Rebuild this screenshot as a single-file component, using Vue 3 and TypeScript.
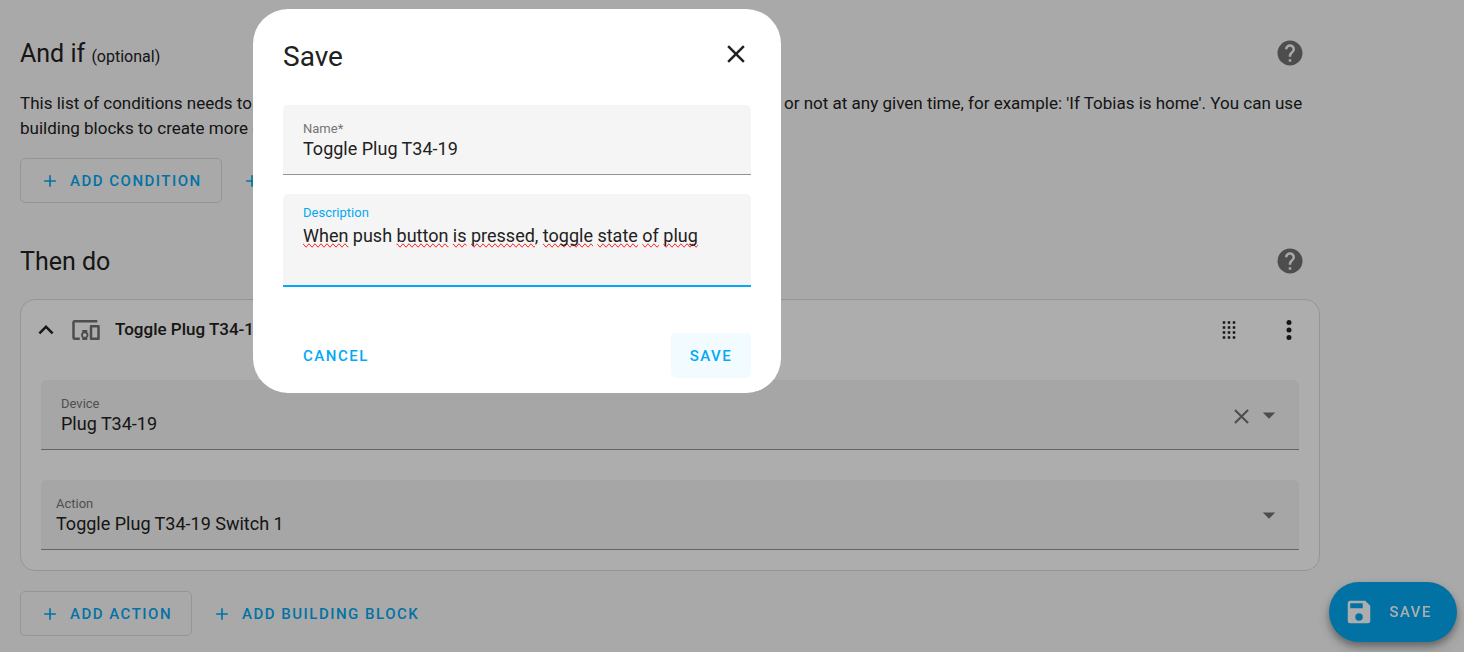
<script setup lang="ts">
import { ref } from 'vue'

const icons = {
  plus: 'M19,13H13V19H11V13H5V11H11V5H13V11H19V13Z',
  close:
    'M19,6.41L17.59,5L12,10.59L6.41,5L5,6.41L10.59,12L5,17.59L6.41,19L12,13.41L17.59,19L19,17.59L13.41,12L19,6.41Z',
  help:
    'M15.07,11.25L14.17,12.17C13.45,12.89 13,13.5 13,15H11V14.5C11,13.39 11.45,12.39 12.17,11.67L13.41,10.41C13.78,10.05 14,9.55 14,9C14,7.89 13.1,7 12,7A2,2 0 0,0 10,9H8A4,4 0 0,1 12,5A4,4 0 0,1 16,9C16,9.88 15.64,10.67 15.07,11.25M13,19H11V17H13M12,2A10,10 0 0,0 2,12A10,10 0 0,0 12,22A10,10 0 0,0 22,12C22,6.47 17.5,2 12,2Z',
  chevronUp: 'M7.41,15.41L12,10.83L16.59,15.41L18,14L12,8L6,14L7.41,15.41Z',
  devices:
    'M3 6H21V4H3A2 2 0 0 0 1 6V18A2 2 0 0 0 3 20H7V18H3M13 12H9V13.78A3 3 0 0 0 9 18.22V20H13V18.22A3 3 0 0 0 13 13.78M11 17.5A1.5 1.5 0 1 1 12.5 16A1.5 1.5 0 0 1 11 17.5M22 8H16A1 1 0 0 0 15 9V19A1 1 0 0 0 16 20H22A1 1 0 0 0 23 19V9A1 1 0 0 0 22 8M21 18H17V10H21Z',
  drag:
    'M7,19V17H9V19H7M11,19V17H13V19H11M15,19V17H17V19H15M7,15V13H9V15H7M11,15V13H13V15H11M15,15V13H17V15H15M7,11V9H9V11H7M11,11V9H13V11H11M15,11V9H17V11H15M7,7V5H9V7H7M11,7V5H13V7H11M15,7V5H17V7H15Z',
  dots:
    'M12,16A2,2 0 0,1 14,18A2,2 0 0,1 12,20A2,2 0 0,1 10,18A2,2 0 0,1 12,16M12,10A2,2 0 0,1 14,12A2,2 0 0,1 12,14A2,2 0 0,1 10,12A2,2 0 0,1 12,10M12,4A2,2 0 0,1 14,6A2,2 0 0,1 12,8A2,2 0 0,1 10,6A2,2 0 0,1 12,4Z',
  menuDown: 'M7,10L12,15L17,10H7Z',
  save:
    'M15,9H5V5H15M12,19A3,3 0 0,1 9,16A3,3 0 0,1 12,13A3,3 0 0,1 15,16A3,3 0 0,1 12,19M17,3H5C3.89,3 3,3.9 3,5V19A2,2 0 0,0 5,21H19A2,2 0 0,0 21,19V7L17,3Z',
}

const device = ref('Plug T34-19')
const action = ref('Toggle Plug T34-19 Switch 1')
const name = ref('Toggle Plug T34-19')

interface Word {
  text: string
  flagged: boolean
}

const words: Word[] = [
  { text: 'When', flagged: true },
  { text: ' push ', flagged: false },
  { text: 'button', flagged: true },
  { text: ' ', flagged: false },
  { text: 'is', flagged: true },
  { text: ' ', flagged: false },
  { text: 'pressed', flagged: true },
  { text: ', ', flagged: false },
  { text: 'toggle', flagged: true },
  { text: ' ', flagged: false },
  { text: 'state', flagged: true },
  { text: ' ', flagged: false },
  { text: 'of', flagged: true },
  { text: ' ', flagged: false },
  { text: 'plug', flagged: true },
]
const description = ref(words.map((w) => w.text).join(''))
</script>

<template>
  <main class="editor">
    <section>
      <header class="section-head">
        <h2>And if <small>(optional)</small></h2>
        <button class="icon-button muted" type="button" aria-label="Learn about conditions">
          <svg viewBox="0 0 24 24"><path :d="icons.help" /></svg>
        </button>
      </header>
      <p class="intro">
        This list of conditions needs to be satisfied for the automation to run. Each condition can be satisfied
        or not at any given time, for example: 'If Tobias is home'. You can use building blocks to create more
        complex conditions.
      </p>
      <div class="buttons">
        <button class="action outlined" type="button">
          <svg viewBox="0 0 24 24"><path :d="icons.plus" /></svg>Add condition
        </button>
        <button class="action" type="button">
          <svg viewBox="0 0 24 24"><path :d="icons.plus" /></svg>Add building block
        </button>
      </div>
    </section>

    <section>
      <header class="section-head">
        <h2>Then do</h2>
        <button class="icon-button muted" type="button" aria-label="Learn about actions">
          <svg viewBox="0 0 24 24"><path :d="icons.help" /></svg>
        </button>
      </header>
      <article class="card">
        <header class="card-head">
          <button class="icon-button small" type="button" aria-label="Collapse">
            <svg viewBox="0 0 24 24"><path :d="icons.chevronUp" /></svg>
          </button>
          <svg class="kind" viewBox="0 0 24 24"><path :d="icons.devices" /></svg>
          <h3>Toggle Plug T34-19 Switch 1</h3>
          <button class="icon-button" type="button" aria-label="Move">
            <svg viewBox="0 0 24 24"><path :d="icons.drag" /></svg>
          </button>
          <button class="icon-button" type="button" aria-label="Menu">
            <svg viewBox="0 0 24 24"><path :d="icons.dots" /></svg>
          </button>
        </header>
        <div class="field">
          <div class="field-text">
            <label for="device">Device</label>
            <select id="device" v-model="device">
              <option>Plug T34-19</option>
            </select>
          </div>
          <button class="clear" type="button" aria-label="Clear">
            <svg viewBox="0 0 24 24"><path :d="icons.close" /></svg>
          </button>
          <svg class="arrow" viewBox="0 0 24 24"><path :d="icons.menuDown" /></svg>
        </div>
        <div class="field tight">
          <div class="field-text">
            <label for="action">Action</label>
            <select id="action" v-model="action">
              <option>Toggle Plug T34-19 Switch 1</option>
            </select>
          </div>
          <svg class="arrow" viewBox="0 0 24 24"><path :d="icons.menuDown" /></svg>
        </div>
      </article>
      <div class="buttons">
        <button class="action outlined" type="button">
          <svg viewBox="0 0 24 24"><path :d="icons.plus" /></svg>Add action
        </button>
        <button class="action" type="button">
          <svg viewBox="0 0 24 24"><path :d="icons.plus" /></svg>Add building block
        </button>
      </div>
    </section>
  </main>

  <button class="fab" type="button">
    <svg viewBox="0 0 24 24"><path :d="icons.save" /></svg>Save
  </button>

  <div class="scrim">
    <form class="dialog" role="dialog" aria-modal="true" aria-labelledby="dialog-title" @submit.prevent>
      <header class="dialog-head">
        <h2 id="dialog-title">Save</h2>
        <button class="icon-button" type="button" aria-label="Close">
          <svg viewBox="0 0 24 24"><path :d="icons.close" /></svg>
        </button>
      </header>
      <div class="field">
        <div class="field-text">
          <label for="name">Name*</label>
          <input id="name" v-model="name" type="text" />
        </div>
      </div>
      <div class="field active">
        <div class="field-text">
          <label for="description">Description</label>
          <div class="spelling">
            <div class="marks" aria-hidden="true">
              <span v-for="(word, i) in words" :key="i" :class="{ flagged: word.flagged }">{{ word.text }}</span>
            </div>
            <textarea id="description" v-model="description" rows="2" spellcheck="false"></textarea>
          </div>
        </div>
      </div>
      <footer class="dialog-actions">
        <button class="action" type="button">Cancel</button>
        <button class="action focused" type="submit">Save</button>
      </footer>
    </form>
  </div>
</template>

<style>
body {
  background: #fafafa;
}
</style>

<style scoped>
.editor,
.fab,
.scrim {
  font-family: Roboto, 'Noto Sans', sans-serif;
  color: #212121;
}

.editor {
  padding: 29px 144px 16px 20px;
  font-size: 17px;
}

section + section {
  margin-top: 34px;
}

svg {
  display: block;
  flex: none;
  width: 30px;
  height: 30px;
  fill: currentColor;
}

h2,
h3,
p {
  margin: 0;
  font-weight: 400;
}

button,
input,
select,
textarea {
  margin: 0;
  padding: 0;
  border: 0;
  outline: 0;
  background: none;
  color: inherit;
  font: inherit;
}

button {
  cursor: pointer;
}

.section-head {
  display: flex;
  align-items: center;
  justify-content: space-between;
  height: 48px;
  margin-bottom: 14px;
}

.section-head h2 {
  font-size: 25px;
}

.section-head small {
  font-size: 16px;
}

.icon-button {
  display: grid;
  flex: none;
  place-items: center;
  width: 60px;
  height: 48px;
}

.icon-button.small {
  width: 30px;
}

.muted {
  color: #727272;
}

.intro {
  margin-bottom: 17px;
  line-height: 25px;
}

.buttons {
  display: flex;
}

.action {
  display: flex;
  align-items: center;
  justify-content: center;
  gap: 10px;
  height: 45px;
  padding: 0 20px;
  border-radius: 5px;
  color: #03a9f4;
  font-size: 15px;
  font-weight: 500;
  letter-spacing: 1.5px;
  text-transform: uppercase;
}

.action svg {
  width: 20px;
  height: 20px;
}

.outlined {
  padding: 0 19px;
  border: 1px solid #dcdcdc;
}

.card {
  margin-bottom: 20px;
  padding: 0 20px 20px;
  border: 1px solid #dcdcdc;
  border-radius: 15px;
  background: #fff;
}

.card-head {
  display: flex;
  align-items: center;
  height: 60px;
  margin: 0 -20px 20px 0;
}

.card-head h3 {
  flex: 1;
  padding-bottom: 3px;
  font-weight: 500;
  font-size: 17px;
}

.card-head .icon-button.small {
  margin-left: -10px;
}

.kind {
  margin: 0 14px 0 10px;
  color: #727272;
}

.field {
  display: flex;
  align-items: center;
  min-height: 69px;
  padding: 0 15px 0 20px;
  border-bottom: 1px solid #949494;
  border-radius: 5px 5px 0 0;
  background: #f5f5f5;
}

.field.tight {
  margin-top: 30px;
  padding-left: 15px;
}

.field-text {
  display: flex;
  flex: 1;
  flex-direction: column;
  padding-top: 2px;
}

.field label {
  color: #757575;
  font-size: 13px;
  line-height: 16px;
}

.field input,
.field select,
.field textarea {
  display: block;
  width: 100%;
  height: 24px;
  appearance: none;
  font-size: 18px;
  line-height: 24px;
}

.clear svg {
  width: 25px;
  height: 25px;
}

.clear {
  padding-top: 3px;
}

.clear,
.arrow {
  color: #727272;
}

.fab {
  position: fixed;
  right: 7px;
  bottom: 10px;
  display: flex;
  align-items: center;
  gap: 15px;
  height: 60px;
  padding: 0 25px 0 15px;
  border-radius: 30px;
  background: #03a9f4;
  box-shadow:
    0 4px 6px rgba(0, 0, 0, 0.25),
    0 6px 14px rgba(0, 0, 0, 0.2);
  color: #fff;
  font-size: 15px;
  font-weight: 500;
  letter-spacing: 1.5px;
  text-transform: uppercase;
}

.scrim {
  position: fixed;
  inset: 0;
  padding: 9px 20px 0 253px;
  background: rgba(0, 0, 0, 0.32);
}

.dialog {
  box-sizing: border-box;
  max-width: 528px;
  padding: 15px 30px;
  border-radius: 35px;
  background: #fff;
}

.dialog-head {
  display: flex;
  align-items: center;
  justify-content: space-between;
  height: 60px;
  margin: 0 -15px 21px 0;
}

.dialog-head h2 {
  padding-top: 4px;
  font-size: 28px;
}

.dialog .active {
  margin-top: 19px;
  border-bottom: 2px solid #03a9f4;
}

.active label {
  color: #03a9f4;
}

.active .field-text {
  padding: 11px 0;
}

.spelling {
  display: grid;
  margin-top: 3px;
}

.spelling > * {
  grid-area: 1 / 1;
}

.marks {
  color: transparent;
  font-size: 18px;
  line-height: 24px;
  white-space: pre-wrap;
}

.flagged {
  text-decoration-line: spelling-error;
}

.field textarea {
  height: 50px;
  overflow: hidden;
  resize: none;
}

.dialog-actions {
  display: flex;
  justify-content: space-between;
  margin: 46px 0 0 10px;
}

.dialog-actions .action {
  min-width: 80px;
  padding: 0 10px;
}

.focused {
  background: #f2fbff;
}
</style>
